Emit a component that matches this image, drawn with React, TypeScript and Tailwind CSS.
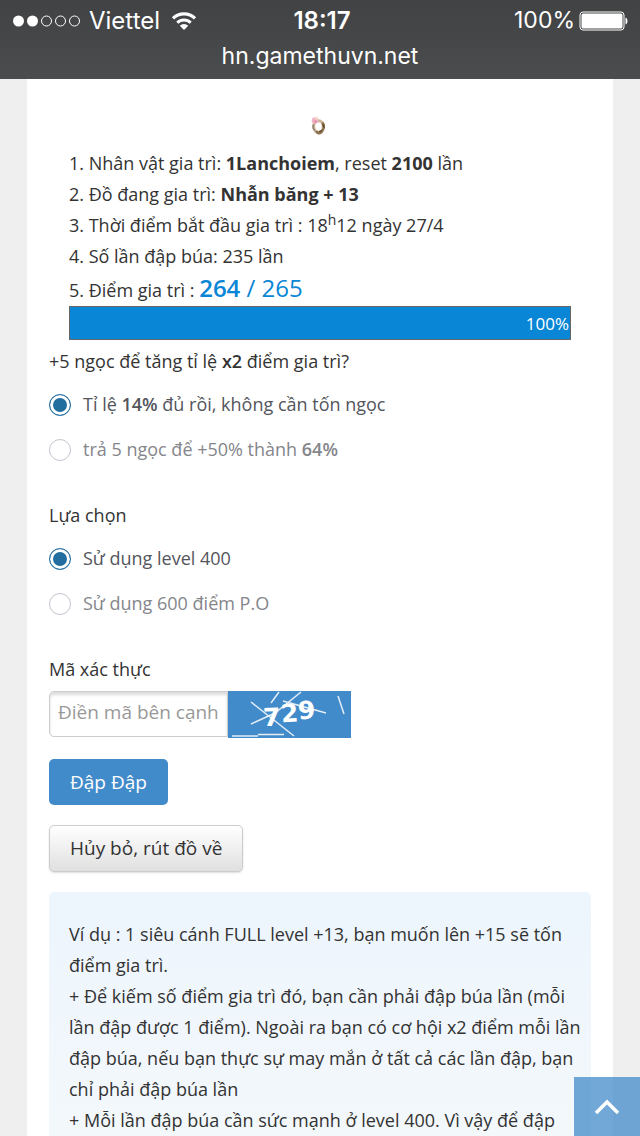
import { useState, type ReactNode } from "react";

function StatusBar() {
  return (
    <header className="relative z-10 flex h-[79px] flex-col bg-gradient-to-b from-[#414243] to-[#4b4c4d] font-['Inter','Liberation_Sans',sans-serif] text-white">
      <div className="grid h-[41px] grid-cols-3 items-center px-3">
        <div className="flex items-center gap-[7px]">
          <svg width="70" height="14" viewBox="0 0 70 14" aria-hidden="true">
            <circle cx="6.5" cy="7" r="5.5" fill="white" />
            <circle cx="20.5" cy="7" r="5.5" fill="white" />
            <circle cx="34.5" cy="7" r="5" fill="none" stroke="white" />
            <circle cx="48.5" cy="7" r="5" fill="none" stroke="white" />
            <circle cx="62.5" cy="7" r="5" fill="none" stroke="white" />
          </svg>
          <span className="text-2xl leading-[41px]">Viettel</span>
          <svg className="ml-1" width="26" height="20" viewBox="0 0 26 20" aria-hidden="true">
            <path d="M2 7.4a15.6 15.6 0 0 1 22 0" fill="none" stroke="white" strokeWidth="3.2" />
            <path d="M6.3 11.8a9.5 9.5 0 0 1 13.4 0" fill="none" stroke="white" strokeWidth="3" />
            <path d="M13 19l-4.2-4.3a6 6 0 0 1 8.4 0z" fill="white" />
          </svg>
        </div>
        <span className="pl-1 text-center text-2xl leading-[41px] font-semibold">18:17</span>
        <div className="flex items-center justify-end gap-1">
          <span className="text-[23px] leading-[41px]">100%</span>
          <svg width="49" height="20" viewBox="0 0 49 20" aria-hidden="true">
            <rect x="1" y="1" width="44" height="18" rx="3" fill="none" stroke="white" />
            <rect x="2.5" y="2.5" width="41" height="15" rx="1.5" fill="white" />
            <path d="M46.5 6.5c2.6 0.5 2.6 6.5 0 7z" fill="white" />
          </svg>
        </div>
      </div>
      <p className="text-center text-[23px] leading-[30px]">hn.gamethuvn.net</p>
    </header>
  );
}

function RingIcon() {
  return (
    <svg className="mx-auto" width="20" height="20" viewBox="0 0 20 20" role="img" aria-label="Nhẫn băng">
      <ellipse cx="8.5" cy="10.5" rx="4.8" ry="5.8" fill="none" stroke="#cdb598" strokeWidth="3" />
      <path d="M12.5 6.5c2 3 1.5 7-1 9.5s-4 1-5.5-1" fill="none" stroke="#8d7350" strokeWidth="2.6" />
      <path d="M12.5 8.5l2 3M9 15.5l3-1" fill="none" stroke="#4f3c24" strokeWidth="1.2" />
      <path d="M3.5 8.5c-1 3 0 5 1.5 6" fill="none" stroke="#8e8373" strokeWidth="1.5" />
      <circle cx="5" cy="4.5" r="3.3" fill="#f0b6c6" />
      <circle cx="6.5" cy="2" r="1.5" fill="#f3dcc4" />
      <circle cx="5.5" cy="5.5" r="1.5" fill="#e691b8" />
    </svg>
  );
}

type ChoiceProps = {
  name: string;
  checked: boolean;
  onSelect: () => void;
  children: ReactNode;
};

function Choice({ name, checked, onSelect, children }: ChoiceProps) {
  return (
    <label className="flex h-[45px] cursor-pointer items-center gap-3 text-[#85868b] has-checked:text-[#53555c]">
      <input
        type="radio"
        name={name}
        checked={checked}
        onChange={onSelect}
        className="size-[22px] shrink-0 appearance-none rounded-full border border-[#c3c5ce] bg-white checked:border-[#2a76a6] checked:bg-[#226f9f] checked:shadow-[inset_0_0_0_3px_white]"
      />
      <span>{children}</span>
    </label>
  );
}

function Captcha() {
  return (
    <svg width="123" height="47" viewBox="0 0 123 47" role="img" aria-label="729" className="shrink-0 bg-[#428bca]">
      <g fill="white" fontFamily="'DejaVu Sans', sans-serif" fontWeight="700" fontSize="25">
        <text x="35" y="35" transform="rotate(-2 44 26)">7</text>
        <text x="53" y="31" transform="rotate(-4 61 23)">2</text>
        <text x="70" y="28" transform="rotate(-4 79 20)">9</text>
      </g>
      <g stroke="white" fill="none" strokeWidth="1.5" strokeOpacity="0.85">
        <path d="M23 11L66 45M23 33L47 22L73 1M43 12L51 1M55 10L98 22M110 5L116 23M4 45H30M30 43.5H56" />
      </g>
    </svg>
  );
}

const notes = [
  "Ví dụ : 1 siêu cánh FULL level +13, bạn muốn lên +15 sẽ tốn điểm gia trì.",
  "+ Để kiếm số điểm gia trì đó, bạn cần phải đập búa lần (mỗi lần đập được 1 điểm). Ngoài ra bạn có cơ hội x2 điểm mỗi lần đập búa, nếu bạn thực sự may mắn ở tất cả các lần đập, bạn chỉ phải đập búa lần",
  "+ Mỗi lần đập búa cần sức mạnh ở level 400. Vì vậy để đập",
];

export default function App() {
  const [rate, setRate] = useState("keep");
  const [cost, setCost] = useState("level");

  return (
    <div className="flex min-h-screen flex-col bg-[#efefef] font-['Open_Sans','Noto_Sans',sans-serif] text-[18px] leading-[31px] text-[#333]">
      <StatusBar />
      <main className="mx-[27px] grow bg-white px-[22px]">
        <section className="px-5 pt-[37px]">
          <RingIcon />
          <ol className="pt-3">
            <li>1. Nhân vật gia trì: <b className="font-bold">1Lanchoiem</b>, reset <b className="font-bold">2100</b> lần</li>
            <li>2. Đồ đang gia trì: <b className="font-bold">Nhẫn băng + 13</b></li>
            <li>3. Thời điểm bắt đầu gia trì : 18<sup className="text-sm leading-none">h</sup>12 ngày 27/4</li>
            <li>4. Số lần đập búa: 235 lần</li>
            <li>
              5. Điểm gia trì :{" "}
              <span className="text-2xl leading-[31px] text-[#0986d5]"><b className="font-semibold">264</b> / 265</span>
            </li>
          </ol>
          <div
            role="progressbar"
            aria-label="Điểm gia trì"
            aria-valuenow={100}
            className="flex h-[34px] items-center justify-end border border-[#666] bg-[#0986d5] px-px text-[17px] text-white"
          >
            100%
          </div>
        </section>

        <form onSubmit={(event) => event.preventDefault()}>
          <fieldset>
            <legend className="pt-[6px] pb-[5px]">+5 ngọc để tăng tỉ lệ <b className="font-semibold">x2</b> điểm gia trì?</legend>
            <Choice name="rate" checked={rate === "keep"} onSelect={() => setRate("keep")}>
              Tỉ lệ <b className="font-semibold">14%</b> đủ rồi, không cần tốn ngọc
            </Choice>
            <Choice name="rate" checked={rate === "boost"} onSelect={() => setRate("boost")}>
              trả 5 ngọc để +50% thành <b className="font-semibold">64%</b>
            </Choice>
          </fieldset>

          <fieldset>
            <legend className="pt-7 pb-[5px]">Lựa chọn</legend>
            <Choice name="cost" checked={cost === "level"} onSelect={() => setCost("level")}>
              Sử dụng level 400
            </Choice>
            <Choice name="cost" checked={cost === "points"} onSelect={() => setCost("points")}>
              Sử dụng 600 điểm P.O
            </Choice>
          </fieldset>

          <label htmlFor="code" className="block pt-7 pb-[6px]">Mã xác thực</label>
          <div className="flex items-start">
            <input
              id="code"
              type="text"
              placeholder="Điền mã bên cạnh"
              className="h-[46px] w-[179px] rounded-l-[5px] border border-[#ccc] px-2 pb-1 text-[19px] shadow-[inset_0_3px_3px_#ddd] placeholder:text-[#999]"
            />
            <Captcha />
          </div>

          <div className="flex flex-col items-start gap-5 pt-[21px] pb-5 text-[19px]">
            <button type="submit" className="h-[46px] rounded-[5px] bg-[#428bca] px-[21px] text-white">Đập Đập</button>
            <button type="button" className="h-[47px] rounded-[5px] border border-[#ccc] bg-gradient-to-b from-white to-[#e0e0e0] px-5 shadow-[0_1px_2px_#ddd]">
              Hủy bỏ, rút đồ về
            </button>
          </div>
        </form>

        <section className="rounded-t-[5px] bg-gradient-to-b from-[#edf5fd] to-[#f3f8fb] pt-[27px] pr-2 pl-5">
          {notes.map((note) => (
            <p key={note}>{note}</p>
          ))}
        </section>
      </main>

      <button
        type="button"
        aria-label="Lên đầu trang"
        onClick={() => window.scrollTo({ top: 0 })}
        className="fixed right-0 bottom-0 flex h-[59px] w-[66px] items-center justify-center bg-[#428bca]/75"
      >
        <svg width="26" height="16" viewBox="0 0 26 16" fill="none" stroke="white" strokeWidth="3.5" aria-hidden="true">
          <path d="M2 14L13 3L24 14" />
        </svg>
      </button>
    </div>
  );
}
